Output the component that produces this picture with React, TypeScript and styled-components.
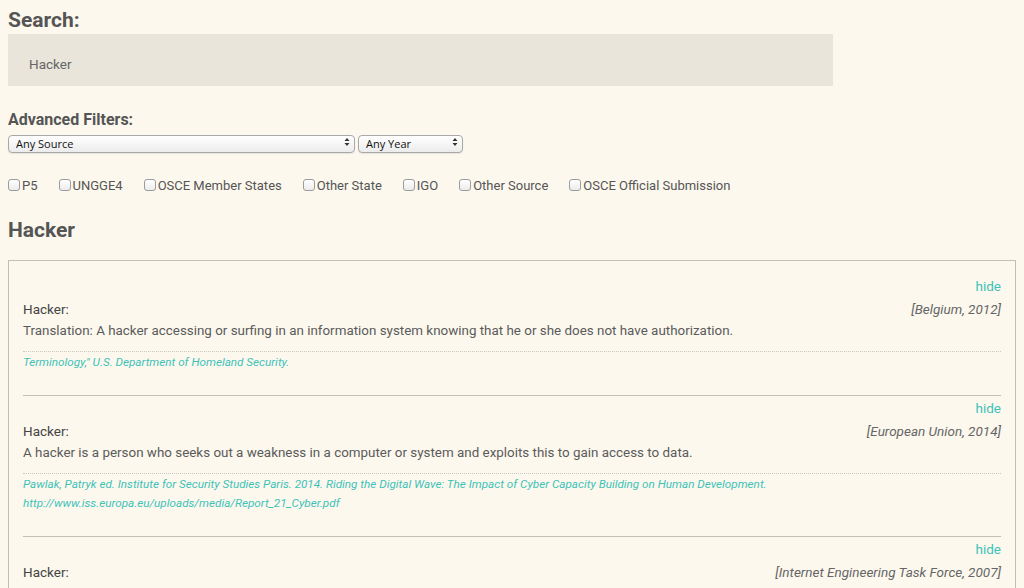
import React from "react";
import styled, { createGlobalStyle } from "styled-components";

const Global = createGlobalStyle`
  html, body { margin: 0; padding: 0; background: #fcf8ee; }
  body { padding: 8px; font-family: Roboto, "Noto Sans", "Liberation Sans", sans-serif; color: #555; }
  * { box-sizing: border-box; }
`;

const Page = styled.div`
  display: flex;
  flex-direction: column;
  width: 1008px;
`;

const Heading = styled.h2<{ $size: number }>`
  margin: 0;
  font-size: ${(p) => p.$size}px;
  font-weight: 700;
  color: #555;
  line-height: 1;
`;

const SearchTitle = styled(Heading)`
  height: 26px;
  padding-top: 2px;
`;

const SearchBox = styled.div`
  width: 825px;
  height: 52px;
  background: #e9e5da;
  display: flex;
  align-items: center;
  padding: 8px 0 0 21px;
  font-size: 13.5px;
  color: #666;
`;

const FiltersTitle = styled(Heading)`
  margin-top: 25px;
  height: 18px;
  display: flex;
  align-items: center;
`;

const SelectRow = styled.div`
  display: flex;
  gap: 3px;
  margin-top: 4px;
`;

const SelectWrap = styled.div<{ $w: number }>`
  position: relative;
  width: ${(p) => p.$w}px;
  height: 18px;
`;

const Select = styled.select`
  appearance: none;
  -webkit-appearance: none;
  width: 100%;
  height: 100%;
  border: 1px solid #a8a8a8;
  border-radius: 4px;
  background: linear-gradient(#ffffff, #ececec);
  font-family: "Open Sans", "Liberation Sans", sans-serif;
  font-size: 11px;
  color: #111;
  padding: 0 0 0 7px;
  box-shadow: 0 1px 1px rgba(0,0,0,0.08);
  outline: none;
`;

const Arrows = styled.svg`
  position: absolute;
  right: 5px;
  top: 4px;
  pointer-events: none;
`;

const CheckRow = styled.div`
  display: flex;
  align-items: center;
  gap: 21px;
  margin-top: 27px;
  height: 14px;
`;

const CheckLabel = styled.label`
  display: flex;
  align-items: center;
  gap: 2px;
  font-size: 13px;
  color: #555;
`;

const Check = styled.input`
  appearance: none;
  -webkit-appearance: none;
  width: 12px;
  height: 12px;
  margin: 0;
  border: 1px solid #9c9c9c;
  border-radius: 3px;
  background: linear-gradient(#ffffff, #ececec);
`;

const ResultTitle = styled(Heading)`
  margin-top: 27px;
  height: 22px;
  display: flex;
  align-items: center;
`;

const ResultsBox = styled.div`
  margin-top: 19px;
  border: 1px solid #c2bfb6;
  border-bottom: none;
  padding: 14px 14px 0;
  display: flex;
  flex-direction: column;
`;

const Entry = styled.div`
  display: flex;
  flex-direction: column;
  padding-bottom: 23px;
  & + & {
    border-top: 1px solid #c2c0b8;
    padding-top: 1px;
  }
`;

const Hide = styled.a`
  align-self: flex-end;
  color: #3ec2b8;
  font-size: 13.5px;
  line-height: 22px;
  text-decoration: none;
`;

const EntryHead = styled.div`
  display: flex;
  justify-content: space-between;
  align-items: center;
  height: 23px;
  font-size: 13.5px;
`;

const Term = styled.span`
  color: #444;
`;

const Origin = styled.span`
  font-style: italic;
  color: #666;
  font-size: 13.5px;
`;

const Definition = styled.p`
  margin: 0;
  font-size: 13.4px;
  line-height: 22px;
  color: #5b5b5b;
`;

const Citation = styled.div`
  margin-top: 9px;
  border-top: 1px dotted #c8c6bf;
  padding-top: 1px;
  font-style: italic;
  font-size: 11.7px;
  line-height: 19px;
  color: #3ec2b8;
`;

const Arrow = () => (
  <Arrows width="6" height="10" viewBox="0 0 6 10">
    <path d="M0.5 4 L3 1 L5.5 4 Z M0.5 6 L3 9 L5.5 6 Z" fill="#333" />
  </Arrows>
);

const filters = ["P5", "UNGGE4", "OSCE Member States", "Other State", "IGO", "Other Source", "OSCE Official Submission"];

const entries = [
  {
    origin: "[Belgium, 2012]",
    def: "Translation: A hacker accessing or surfing in an information system knowing that he or she does not have authorization.",
    cite: ["Terminology,\" U.S. Department of Homeland Security."],
  },
  {
    origin: "[European Union, 2014]",
    def: "A hacker is a person who seeks out a weakness in a computer or system and exploits this to gain access to data.",
    cite: [
      "Pawlak, Patryk ed. Institute for Security Studies Paris. 2014. Riding the Digital Wave: The Impact of Cyber Capacity Building on Human Development.",
      "http://www.iss.europa.eu/uploads/media/Report_21_Cyber.pdf",
    ],
  },
  {
    origin: "[Internet Engineering Task Force, 2007]",
    def: "A someone with a strong interest in, and knowledge of, computers and networks.",
    cite: ["Shirey, R. 2007. Internet Security Glossary, Version 2."],
  },
];

export default function App() {
  return (
    <>
      <Global />
      <Page>
        <SearchTitle $size={21}>Search:</SearchTitle>
        <SearchBox>Hacker</SearchBox>
        <FiltersTitle $size={16}>Advanced Filters:</FiltersTitle>
        <SelectRow>
          <SelectWrap $w={347}>
            <Select defaultValue="any"><option value="any">Any Source</option></Select>
            <Arrow />
          </SelectWrap>
          <SelectWrap $w={105}>
            <Select defaultValue="any"><option value="any">Any Year</option></Select>
            <Arrow />
          </SelectWrap>
        </SelectRow>
        <CheckRow>
          {filters.map((f) => (
            <CheckLabel key={f}>
              <Check type="checkbox" />
              {f}
            </CheckLabel>
          ))}
        </CheckRow>
        <ResultTitle $size={21}>Hacker</ResultTitle>
        <ResultsBox>
          {entries.map((e) => (
            <Entry key={e.origin}>
              <Hide href="#">hide</Hide>
              <EntryHead>
                <Term>Hacker:</Term>
                <Origin>{e.origin}</Origin>
              </EntryHead>
              <Definition>{e.def}</Definition>
              <Citation>
                {e.cite.map((c) => (
                  <div key={c}>{c}</div>
                ))}
              </Citation>
            </Entry>
          ))}
        </ResultsBox>
      </Page>
    </>
  );
}
